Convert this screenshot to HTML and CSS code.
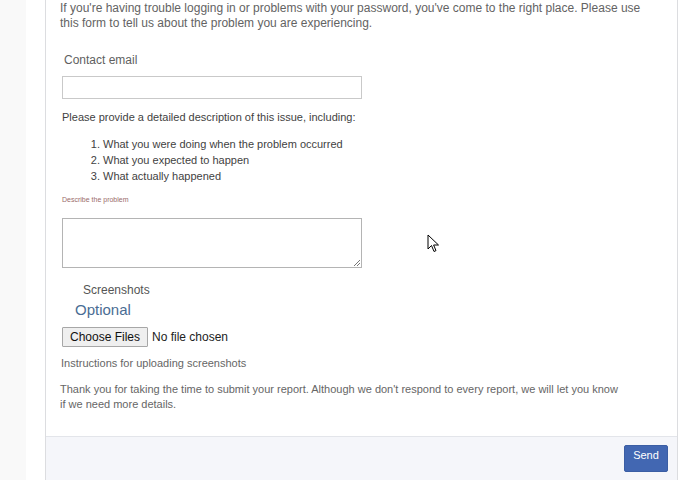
FILE: index.html
```html
<!DOCTYPE html>
<html>
<head>
<meta charset="utf-8">
<link rel="stylesheet" href="styles.css">
</head>
<body>
<div class="page">
  <div class="side"></div>
  <div class="gap"></div>
  <div class="card">
    <div class="body">
      <p class="intro">If you're having trouble logging in or problems with your password, you've come to the right place. Please use this form to tell us about the problem you are experiencing.</p>
      <div class="lbl-email">Contact email</div>
      <div class="input"></div>
      <div class="desc">Please provide a detailed description of this issue, including:</div>
      <ol class="list">
        <li>What you were doing when the problem occurred</li>
        <li>What you expected to happen</li>
        <li>What actually happened</li>
      </ol>
      <div class="tiny">Describe the problem</div>
      <div class="textarea"><svg class="grip" width="9" height="9" viewBox="0 0 9 9"><path d="M8 2 L2 8 M8 5 L5 8" stroke="#777" stroke-width="1"/></svg></div>
      <div class="shots">Screenshots</div>
      <div class="optional">Optional</div>
      <div class="file"><span class="btn">Choose Files</span><span class="nofile">No file chosen</span></div>
      <div class="instr">Instructions for uploading screenshots</div>
      <p class="thanks">Thank you for taking the time to submit your report. Although we don't respond to every report, we will let you know if we need more details.</p>
    </div>
    <div class="foot"><span class="send">Send</span></div>
  </div>
  <div class="right"></div>
</div>
<svg class="cursor" width="13" height="20" viewBox="0 0 13 20"><path d="M1 1 L1 15 L4.5 11.5 L7 17.5 L9 16.6 L6.6 11 L11.5 11 Z" fill="#fff" stroke="#000" stroke-width="1" stroke-linejoin="round"/></svg>
</body>
</html>
```
FILE: styles.css
```css
html, body { margin: 0; padding: 0; }
body { width: 698px; height: 480px; overflow: hidden; background: #fff; font-family: "Liberation Sans", Arial, sans-serif; position: relative; }
.page { display: flex; height: 480px; }
.side { width: 26px; background: #f9f9f9; flex: none; }
.gap { width: 19px; flex: none; }
.card { width: 631px; flex: none; border-left: 1px solid #dcdde0; border-right: 1px solid #dcdde0; display: flex; flex-direction: column; }
.body { flex: 1; padding: 0 0 0 14px; }
.intro { margin: 0; padding-top: 1px; width: 588px; font-size: 12px; line-height: 15px; color: #636363; }
.lbl-email { margin: 22px 0 0 4px; font-size: 12px; line-height: 15px; color: #5f5f5f; }
.input { margin: 8px 0 0 2px; width: 298px; height: 21px; border: 1px solid #c9c9c9; }
.desc { margin: 11px 0 0 2px; font-size: 11px; line-height: 14px; color: #3f3f3f; }
.list { margin: 12px 0 0 0; padding-left: 43px; font-size: 11px; line-height: 16px; color: #3f3f3f; }
.tiny { margin: 11px 0 0 2px; font-size: 7px; line-height: 9px; color: #9a6b6b; }
.textarea { margin: 14px 0 0 2px; width: 298px; height: 48px; border: 1px solid #b4b4b4; position: relative; }
.grip { position: absolute; right: 0; bottom: 0; }
.shots { margin: 15px 0 0 23px; font-size: 12px; line-height: 15px; color: #555; }
.optional { margin: 3px 0 0 15px; font-size: 15px; line-height: 18px; color: #4a6d94; }
.file { margin: 8px 0 0 2px; display: flex; align-items: center; font-size: 12px; color: #222; }
.btn { box-sizing: border-box; width: 86px; height: 20px; line-height: 18px; text-align: center; border: 1px solid #a7a7a7; background: #efefef; color: #111; border-radius: 1px; }
.nofile { margin-left: 4px; }
.instr { margin: 9px 0 0 1px; font-size: 11px; line-height: 14px; color: #666; }
.thanks { margin: 12px 0 0 0; width: 562px; font-size: 11px; line-height: 15px; color: #666; }
.foot { height: 44px; flex: none; background: #f5f6fa; border-top: 1px solid #e3e5ea; display: flex; justify-content: flex-end; align-items: flex-start; padding: 8px 9px 0 0; box-sizing: border-box; }
.send { width: 44px; height: 27px; box-sizing: border-box; background: #4267b2; border: 1px solid #3b5ea4; border-radius: 2px; color: #fff; font-size: 11px; line-height: 19px; text-align: center; }
.cursor { position: absolute; left: 427px; top: 234px; }
```
